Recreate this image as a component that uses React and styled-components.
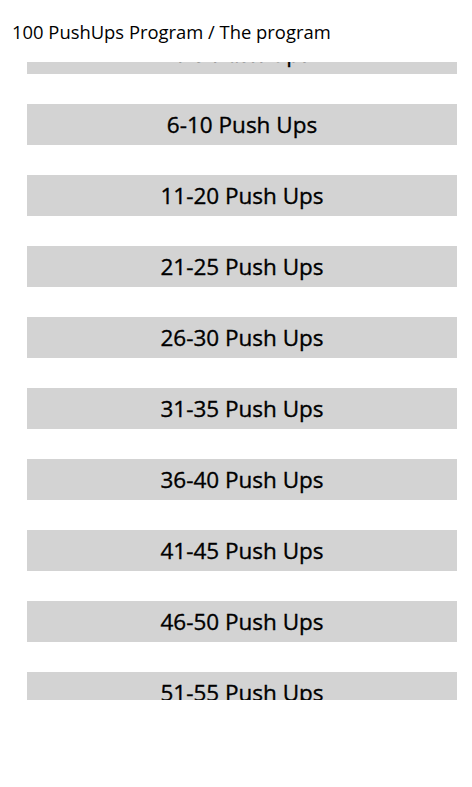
import React from "react";
import styled, { createGlobalStyle } from "styled-components";

const Global = createGlobalStyle`
  html, body { margin: 0; padding: 0; background: #ffffff; }
  body { font-family: "Open Sans", "Noto Sans", sans-serif; color: #000; }
`;

const Page = styled.div`
  width: 472px;
  height: 787px;
  background: #ffffff;
  overflow: hidden;
  display: flex;
  flex-direction: column;
`;

const Header = styled.div`
  height: 62px;
  padding-left: 12px;
  box-sizing: border-box;
  padding-top: 19px;
  font-size: 18.4px;
  line-height: 26px;
  color: #000;
  white-space: nowrap;
`;

const Viewport = styled.div`
  height: 638px;
  overflow: hidden;
`;

const List = styled.ul`
  list-style: none;
  margin: -29px 0 0 0;
  padding: 0 15px 0 27px;
  display: flex;
  flex-direction: column;
  gap: 30px;
`;

const Item = styled.li`
  height: 41px;
  box-sizing: border-box;
  padding-bottom: 1px;
  background: #d3d3d3;
  display: flex;
  align-items: center;
  justify-content: center;
  font-size: 22.5px;
  font-weight: 400;
  -webkit-text-stroke: 0.35px #000;
  color: #000;
  white-space: nowrap;
`;

const ranges = [
  "1-5",
  "6-10",
  "11-20",
  "21-25",
  "26-30",
  "31-35",
  "36-40",
  "41-45",
  "46-50",
  "51-55",
  "56-60",
];

export default function App() {
  return (
    <>
      <Global />
      <Page>
        <Header>100 PushUps Program / The program</Header>
        <Viewport>
          <List>
            {ranges.map((r) => (
              <Item key={r}>{r} Push Ups</Item>
            ))}
          </List>
        </Viewport>
      </Page>
    </>
  );
}
